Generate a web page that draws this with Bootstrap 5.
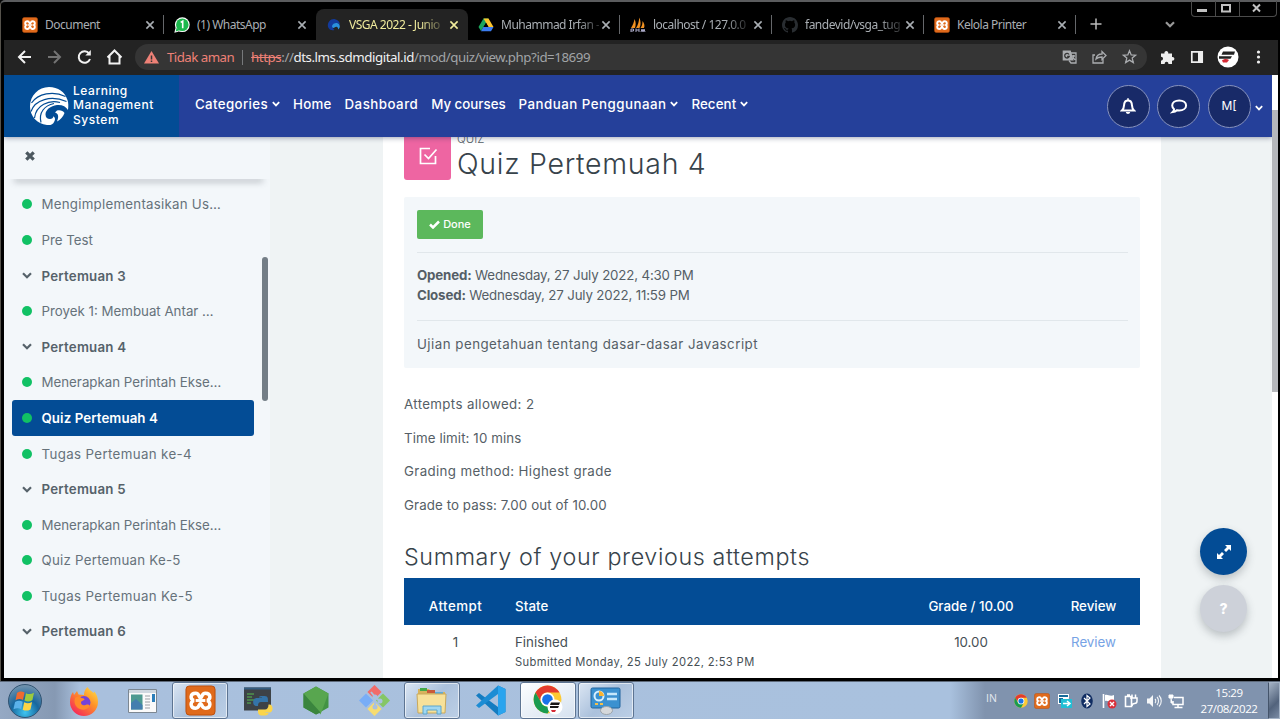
<!DOCTYPE html>
<html lang="id">
<head>
<meta charset="utf-8">
<meta name="viewport" content="width=device-width, initial-scale=1">
<title>VSGA 2022 - Junior Web Developer</title>
<link href="https://cdn.jsdelivr.net/npm/bootstrap@5.3.0/dist/css/bootstrap.min.css" rel="stylesheet">
<style>
  html, body { height: 100%; }
  body { width: 1280px; height: 719px; overflow: hidden; background: #050505; font-family: Inter, "Open Sans", sans-serif; font-size: 13.3px; line-height: 20px; color: #555e66; }
  svg { display: block; flex: none; }
  .defs { width: 0; height: 0; position: absolute; }
  /* letter spacing steps */
  .ls1 { letter-spacing: .1px; }
  .ls2 { letter-spacing: .24px; }
  .ls3 { letter-spacing: .36px; }
  .ls4 { letter-spacing: .48px; }
  /* browser window */
  .win { height: 681px; border-top: 2px solid #5b5c5e; border-left: 1px solid #55524b; padding: 0 2px 3px 3px; background: #000; border-radius: 5px 0 0 0; }
  .tabs { height: 38px; padding-left: 8px; font: 12px/16px "Noto Sans", "Open Sans", sans-serif; color: #a9aeb3; }
  .btab { width: 152px; margin-top: 7px; height: 31px; padding: 0 9px 0 10px; position: relative; }
  .btab.sep::after { content: ""; position: absolute; right: 0; top: 6px; height: 19px; width: 1px; background: #65676a; }
  .btab .ttl { margin-left: 7px; white-space: nowrap; letter-spacing: -.5px; }
  .btab .fade-end { -webkit-mask-image: linear-gradient(90deg, #000 78%, rgba(0,0,0,.25)); mask-image: linear-gradient(90deg, #000 78%, rgba(0,0,0,.25)); }
  .btab.on { background: #232323; border-radius: 8px 8px 0 0; color: #f0eb9c; }
  .wctl { width: 86px; height: 16px; margin: -1px 1px 0 0; border: 1px solid #4b4b4b; border-top: 0; border-radius: 0 0 4px 4px; color: #c2c2c2; }
  .bar { height: 35px; background: #232323; padding: 0 13px 1px 12px; font: 13.3px/18px "Noto Sans", "Open Sans", sans-serif; }
  .omni { width: 1012px; height: 26px; border-radius: 13px; background: #353535; margin-left: 10px; padding: 0 9px; color: #a1a4a7; }
  .omni .warn { color: #ee8177; }
  .omni .host { color: #f1f2f3; }
  .omni span { white-space: nowrap; }
  .omni .divide { width: 1px; height: 15px; background: #77797b; margin: 0 8px; }
  .tidak { letter-spacing: -.55px; }
  .url { letter-spacing: -.44px; }
  /* page */
  .page { height: 603px; background: #eff3f4; }
  .head { height: 62px; background: #25409a; color: #fff; box-shadow: 0 1px 5px rgba(20,30,70,.4); position: relative; z-index: 3; }
  .brand { width: 175px; height: 62px; background: #034c95; padding: 0 0 1px 25px; font-size: 12px; line-height: 14.2px; font-weight: 500; letter-spacing: .55px; }
  .menu { margin-left: 16px; gap: 13px; font-size: 13.3px; font-weight: 500; margin-top: -5px; }
  .menu .it { gap: 4px; white-space: nowrap; }
  .users { gap: 7.5px; padding-right: 9px; }
  .rnd { width: 43px; height: 43px; border-radius: 50%; background: #182a68; border: 1px solid #8792bd; font-size: 12px; }
  .side { width: 266px; background: #f3f7fa; color: #66727a; }
  .side-top { height: 42px; padding: 0 0 4px 21px; position: relative; z-index: 2; }
  .side-top::after { content: ""; position: absolute; left: 8px; right: 5px; bottom: 0; height: 8px; box-shadow: 0 5px 6px -2px rgba(70,80,90,.38); z-index: -1; }
  .side-top::before { content: ""; position: absolute; inset: 0; background: #f3f7fa; z-index: 0; }
  .side-top svg { position: relative; z-index: 1; }
  .list { padding: 7.7px 16px 0 8px; }
  .li { height: 35.58px; padding-left: 10px; gap: 9.5px; white-space: nowrap; }
  .li .dot { width: 10px; height: 10px; border-radius: 50%; background: #11c164; flex: none; }
  .li.b { font-weight: 600; color: #56626a; letter-spacing: .22px; }
  .li.on { background: #034c95; color: #fff; font-weight: 600; border-radius: 3px; letter-spacing: .08px; }
  .sthumb { position: absolute; left: 258px; top: 182px; width: 6px; height: 144px; border-radius: 3px; background: #747e87; }
  .main { width: 778px; margin-left: 113px; background: #fff; padding: 0 21px; }
  .qico { width: 47px; height: 43px; background: #ee65a2; border-radius: 0 0 3px 3px; }
  .kind { font-size: 11.5px; line-height: 14px; margin-top: -5px; text-transform: uppercase; font-weight: 300; }
  .qtitle { font-size: 28.5px; line-height: 34px; font-weight: 300; color: #37434b; margin: 1px 0 0; letter-spacing: .7px; }
  .info { margin-top: 16px; height: 171px; background: #f3f7fa; border-radius: 2px; padding: 12.5px 12px 0 13px; }
  .done { width: 66px; height: 29px; border-radius: 2px; background: #5cb85c; color: #fff; font-size: 11px; font-weight: 500; gap: 3px; }
  .info .rule { height: 1px; background: #e1e7eb; margin-top: 13px; }
  .info .dates { line-height: 20.7px; margin: 12px 0 14px; letter-spacing: -.16px; }
  .facts { margin-top: 26px; }
  .facts div { height: 33.7px; }
  h3.sum { font-size: 23.3px; line-height: 30px; font-weight: 300; color: #37434b; margin: 13px 0 0; letter-spacing: .62px; }
  .att { margin-top: 6px; width: 736px; color: #464f55; table-layout: fixed; border-collapse: collapse; }
  .att th { background: #034c95; color: #fff; font-weight: 500; height: 47px; padding: 9px 8px 0; }
  .att td { padding: 7.5px 8px 0; vertical-align: top; }
  .att .sub { font-size: 11.2px; line-height: 20px; letter-spacing: .37px; }
  .att .c1 { width: 103px; } .att .c2 { width: 388px; } .att .c3 { width: 152px; } .att .c4 { width: 93px; }
  .att .rev { color: #77a3e5; }
  .fab { position: absolute; z-index: 4; width: 47px; height: 47px; border-radius: 50%; left: 1196px; box-shadow: 0 4px 8px rgba(50,60,70,.28); }
  .fab.full { top: 453px; background: #034c95; }
  .fab.help { top: 510px; background: #cdd1d9; color: #fff; font-weight: 800; font-size: 14px; }
  .scroll { width: 6px; background: #fff; height: 603px; padding-top: 35px; }
  .scroll div { height: 282px; background: #b5b7bb; }
  /* taskbar */
  .task { height: 38px; border-top: 1px solid #5e6a7a; background: linear-gradient(90deg, #95a9c4 0, #8699b3 55px, #a9c0dd 80px, #a9c1de 950px, #8093ae 985px, #8093ae 100%); font: 11.5px/16px "Open Sans", "Noto Sans", sans-serif; color: #fff; }
  .tb { width: 58px; height: 37px; }
  .tb.open { width: 56px; margin: 0 1px; border: 1px solid #5d7492; border-radius: 3px; background: linear-gradient(135deg, #dbe6f3, #abc1dc 50%, #bccfe6); box-shadow: inset 0 0 0 1px rgba(255,255,255,.6); }
  .tb.act { background: linear-gradient(150deg, #fdfeff, #d5e1ef); }
  .start { width: 55px; padding-left: 8px; }
  .lang { font-size: 10.5px; margin: -5px 17px 0 0; color: #e4e9f0; }
  .tray { gap: 6.3px; }
  .clock { width: 62px; text-align: center; letter-spacing: -.4px; margin: 1px 8px 0 14px; white-space: nowrap; }
  .desk { width: 12px; height: 37px; border: 1px solid #a4b3c6; border-left-color: #44546a; background: linear-gradient(135deg, #a5b3c5, #52637c 60%, #7a8ba4); }
</style>
</head>
<body>
<svg class="defs" aria-hidden="true">
  <symbol id="x" viewBox="0 0 10 10"><path d="M1.4 1.4l7.2 7.2M8.6 1.4L1.4 8.6" stroke="currentColor" stroke-width="1.6"/></symbol>
  <symbol id="cv" viewBox="0 0 10 7"><path d="M1 1.3l4 4 4-4" fill="none" stroke="currentColor" stroke-width="2.200"/></symbol>
  <symbol id="xampp" viewBox="0 0 32 32"><rect x="1" y="1" width="30" height="30" rx="3.5" fill="#e06a1b" stroke="#bb5010"/><path d="M11 8.5c-6 0-6 7-1.500 7.500-4.500.5-4.500 8 1.500 8 4 0 3.500-5 5-5s1 5 5 5c6 0 6-7.500 1.500-8 4.500-.5 4.500-7.500-1.500-7.500-4 0-3.500 5-5 5s-1-5-5-5z" fill="none" stroke="#fff" stroke-width="3.600"/><path d="M11 16h10" stroke="#fff" stroke-width="3"/></symbol>
  <symbol id="chrome" viewBox="0 0 48 48"><circle cx="24" cy="24" r="23" fill="#fcc934"/><path d="M4.100 12.500A23 23 0 0 1 43.900 12.500H24a11.500 11.500 0 0 0-10 17.250z" fill="#e33b2e"/><path d="M4.100 12.500L14 29.750a11.500 11.500 0 0 0 20 0L24 47A23 23 0 0 1 4.100 12.500z" fill="#199b50"/><circle cx="24" cy="24" r="11.500" fill="#fff"/><circle cx="24" cy="24" r="8.800" fill="#1a73e8"/></symbol>
</svg>

<div class="win d-flex flex-column">
  <div class="tabs d-flex align-items-start">
    <div class="btab sep d-flex align-items-center"><svg width="16" height="16"><use href="#xampp"/></svg><span class="ttl">Document</span><svg class="ms-auto" width="10" height="10"><use href="#x"/></svg></div>
    <div class="btab d-flex align-items-center"><svg width="16" height="16" viewBox="0 0 16 16"><circle cx="8.300" cy="7.700" r="7.400" fill="#fff"/><path d="M.3 15.700L1.500 11 5 14.500z" fill="#fff"/><circle cx="8.300" cy="7.700" r="6.300" fill="#1cb84d"/><path d="M1.700 14.400l1-4 2.800 2.900z" fill="#1cb84d"/><path d="M6.700 5.400l2-1.200v7" fill="none" stroke="#fff" stroke-width="1.600"/></svg><span class="ttl">(1) WhatsApp</span><svg class="ms-auto" width="10" height="10"><use href="#x"/></svg></div>
    <div class="btab on d-flex align-items-center"><svg width="16" height="16" viewBox="0 0 16 16"><path d="M2 10C1 5 5 1.500 9 2.200c3 .6 5 3 5 5.800-2-2.500-6-2-7 .5-.6 1.500 0 3.500 1.500 4.500C5.500 14 3 12.500 2 10z" fill="#123a9c"/><path d="M6 9c1-3.500 6-4 7.500-1 .7 1.500.3 3.500-1.500 4.500.5-3-2-3.500-3.500-2C7.700 11.500 6 11 6 9z" fill="#2a8fdd"/></svg><span class="ttl fade-end">VSGA 2022 - Junio</span><svg class="ms-auto" width="10" height="10"><use href="#x"/></svg></div>
    <div class="btab sep d-flex align-items-center"><svg width="16" height="16" viewBox="0 0 16 16"><path d="M5.500 1.500h5L8 6 3 14 .5 10z" fill="#1ba55c"/><path d="M5.500 1.500h5L15.500 10h-5z" fill="#fdc52c"/><path d="M5.300 10h10.200L13 14.300H3z" fill="#3b7cf0"/><path d="M8 5.800l2.400 4.200H5.600z" fill="#000"/></svg><span class="ttl fade-end ls-tab">Muhammad Irfan -</span><svg class="ms-auto" width="10" height="10"><use href="#x"/></svg></div>
    <div class="btab sep d-flex align-items-center"><svg width="16" height="16" viewBox="0 0 16 16"><path d="M1 11C3 8 4 5 4.500 2c1.500 3 1.500 6 .5 9zM6 11c2-3 3-6 3.200-10.500C11 4 11 8 9.500 11zM10.500 11c1.500-2 2-4 2-7 1.800 2 2.500 5 1.500 7z" fill="#f29222"/><path d="M1 15v-3h2.500v2H1m5 1v-3.500M6 13h3M9 11.500V15m2 0l1-3 1 3 1-3 1 3" fill="none" stroke="#aaa9c6"/></svg><span class="ttl fade-end">localhost / 127.0.0</span><svg class="ms-auto" width="10" height="10"><use href="#x"/></svg></div>
    <div class="btab sep d-flex align-items-center"><svg width="16" height="16" viewBox="0 0 16 16"><path fill="#292d31" d="M8 0C3.580 0 0 3.580 0 8c0 3.540 2.290 6.530 5.470 7.590.4.070.55-.17.55-.38v-1.490c-2.010.37-2.530-.49-2.690-.94-.09-.23-.48-.94-.82-1.130-.28-.15-.68-.52-.01-.53.63-.01 1.080.58 1.230.82.72 1.210 1.870.87 2.330.66.07-.52.28-.87.51-1.070-1.780-.2-3.640-.89-3.640-3.950 0-.87.31-1.590.82-2.150-.08-.2-.36-1.020.08-2.120 0 0 .67-.21 2.200.82a7.600 7.600 0 0 1 4 0c1.530-1.040 2.200-.82 2.200-.82.44 1.100.16 1.920.08 2.120.51.56.82 1.270.82 2.150 0 3.070-1.870 3.750-3.650 3.950.29.25.54.73.54 1.480v2.200c0 .21.15.46.55.38A8 8 0 0 0 16 8c0-4.420-3.580-8-8-8z"/></svg><span class="ttl fade-end">fandevid/vsga_tug</span><svg class="ms-auto" width="10" height="10"><use href="#x"/></svg></div>
    <div class="btab sep d-flex align-items-center"><svg width="16" height="16"><use href="#xampp"/></svg><span class="ttl">Kelola Printer</span><svg class="ms-auto" width="10" height="10"><use href="#x"/></svg></div>
    <svg style="margin:16px 0 0 14px" width="12" height="12" viewBox="0 0 12 12"><path d="M6 .5v11M.5 6h11" stroke="#bbb" stroke-width="1.500"/></svg>
    <svg style="margin:19px 0 0 63px;color:#999" width="10" height="7"><use href="#cv"/></svg>
    <div class="wctl d-flex ms-auto"><svg width="84" height="15" viewBox="0 0 84 15"><path d="M5 9.500h10" stroke="currentColor" stroke-width="3"/><rect x="30" y="4" width="8" height="6.500" fill="none" stroke="currentColor" stroke-width="2"/><path d="M23.500 0v15M47.500 0v15" stroke="#4b4b4b"/><path d="M61 3.500l7 7M68 3.500l-7 7" stroke="currentColor" stroke-width="2"/></svg></div>
  </div>

  <div class="bar d-flex align-items-center">
    <svg width="109" height="18" viewBox="0 0 109 18" fill="none" stroke="#f2f2f2" stroke-width="2"><path d="M15 9H3m6-6L3 9l6 6"/><path stroke="#737373" d="M32 9h12m-6-6l6 6-6 6"/><path d="M73.200 5.500A5.800 5.800 0 1 0 74 11"/><path d="M74.800 2v5.500h-5.500z" fill="#f2f2f2" stroke="none"/><path d="M91.500 9.500l7-7 7 7M93.500 8v7.500h10V8"/></svg>
    <div class="omni d-flex align-items-center">
      <svg width="15" height="13" viewBox="0 0 15 13"><path d="M7.500 0L15 12.500H0z" fill="#ee8177"/><path d="M7.500 4.500v4M7.500 9.500V11" stroke="#353535" stroke-width="1.500"/></svg>
      <span class="warn ms-2 tidak">Tidak aman</span>
      <span class="divide"></span>
      <span class="url"><s class="warn">https</s>://<span class="host">dts.lms.sdmdigital.id</span>/mod/quiz/view.php?id=18699</span>
      <svg class="ms-auto" width="76" height="16" viewBox="0 0 76 16" fill="none" stroke="#abadb0" stroke-width="1.300"><path d="M.7 1.500h8l3 10h-11z" fill="#abadb0" stroke="none"/><path d="M9 4h5v10H9l-2-2.500M10 7h3M11.500 6c0 3-.5 4-1.500 4.500M11 8l2 3"/><path d="M7 5.500A2.300 2.300 0 1 0 7.200 7.500H5.200" stroke="#353535"/><path d="M33 6h-2v8h10v-4M34 10c.5-3.500 3-5 6-5V2.500l4 4-4 4V8c-3 0-4.500.5-6 2z"/><path d="M67.500 1.800l1.700 4.100 4.400.3-3.400 2.900 1.100 4.400-3.800-2.400-3.800 2.400 1.100-4.400-3.400-2.900 4.400-.3z"/></svg>
    </div>
    <svg class="ms-auto" width="106" height="22" viewBox="0 0 106 22"><path d="M2 7.500h3.500c-.8-3.500 4.500-3.500 3.700 0H13v3.600c3.200-.6 3.200 4.100 0 3.500V18H9.400c.3-3-4-3-3.700 0H2v-3.500c2.700 0 2.700-3.800 0-3.800z" fill="#eee"/><path d="M32.800 5.800h10.400v10.400H32.800z" fill="none" stroke="#eee" stroke-width="1.700"/><path d="M39 5h5v12h-5z" fill="#eee"/><circle cx="69" cy="11" r="10.500" fill="#fff"/><path d="M64 5.500h12l-1 3.200H62.500zM60 10.200h13l-1.500 2.500H60z" fill="#222"/><path d="M63 14.500c2-2 5-2 7-.5l-2 2.500h-4z" fill="#d62a35"/><g fill="#eee"><circle cx="99.500" cy="6" r="1.600"/><circle cx="99.500" cy="11" r="1.600"/><circle cx="99.500" cy="16" r="1.600"/></g></svg>
  </div>

  <div class="d-flex">
    <div class="page flex-grow-1 position-relative overflow-hidden">
      <header class="head d-flex align-items-center">
        <div class="brand d-flex align-items-center">
          <svg width="40" height="40" viewBox="0 0 40 40"><path d="M20 1c9 0 16 5 18.500 13C39.500 17 39.500 20 39 24c-2-3.500-6-5.500-11-5-6.500.7-11.500 5-11.500 9.500 0 3 2 4.500 4.500 4.500 2 0 3.500-1.200 3.300-2.800 1.900 1 2.200 3.300 1 5.300C24 38.500 21.500 39.500 18 39 8 38 1 30 1 20.500 1 9.500 9.500 1 20 1z" fill="#fff"/><path d="M28 24.500c3-.8 6 0 7.500 2.500-1.500 4-4 6.500-7.500 8.500 2-4.500 1.500-8-2-9z" fill="#fff"/><path d="M2.500 17C9 7.500 24 4.500 36.500 10.500M2 25.500C6 13.500 22 9 37.500 15.500M5.500 32C7 19 20 13.500 31 16.500M12 36.500C9.500 26.500 15.500 19.500 25 17.500" fill="none" stroke="#034c95" stroke-width="1.200"/></svg>
          <div class="ms-1">Learning<br>Management<br>System</div>
        </div>
        <nav class="menu d-flex align-items-center">
          <span class="it ls3 d-flex align-items-center">Categories<svg width="8" height="6"><use href="#cv"/></svg></span>
          <span class="it ls2">Home</span><span class="it ls4">Dashboard</span><span class="it">My courses</span>
          <span class="it ls4 d-flex align-items-center">Panduan Penggunaan<svg width="8" height="6"><use href="#cv"/></svg></span>
          <span class="it ls1 d-flex align-items-center">Recent<svg width="8" height="6"><use href="#cv"/></svg></span>
        </nav>
        <div class="users ms-auto d-flex align-items-center">
          <div class="rnd d-flex align-items-center justify-content-center"><svg width="16" height="17" viewBox="0 0 16 17"><path d="M2 12.500c2-2 2-4 2.200-6.500.3-2.300 1.800-3.600 3.800-3.600s3.500 1.300 3.800 3.600c.2 2.500.2 4.500 2.200 6.500z" fill="none" stroke="#fff" stroke-width="2"/><path d="M7.200.3h1.600v2H7.200zM5.800 14h4.400c-.3 2.600-4.100 2.600-4.400 0z" fill="#fff"/></svg></div>
          <div class="rnd d-flex align-items-center justify-content-center"><svg width="18" height="17" viewBox="0 0 18 17"><path d="M9.200 2.500c4 0 6.900 2 6.900 4.900s-2.900 5-6.900 5c-.8 0-1.500 0-2.200-.2-1.300 1.200-2.700 1.700-4.300 1.900.9-.8 1.300-1.700 1.400-2.900-1.200-.9-1.900-2.200-1.900-3.700 0-3 3-5 7-5z" fill="none" stroke="#fff" stroke-width="2"/></svg></div>
          <div class="rnd d-flex align-items-center justify-content-center">M[</div>
          <svg style="margin-left:-3px;margin-top:3px" width="8" height="6"><use href="#cv"/></svg>
        </div>
      </header>
      <div class="d-flex" style="height:541px">
        <aside class="side overflow-hidden">
          <div class="side-top d-flex align-items-center"><svg width="10" height="10" viewBox="0 0 10 10"><path d="M1.300 1.300l7.400 7.400M8.700 1.300L1.300 8.700" stroke="#4c585f" stroke-width="3.200"/></svg></div>
          <div class="list">
            <div class="li ls2 d-flex align-items-center"><i class="dot"></i>Mengimplementasikan Us…</div>
            <div class="li d-flex align-items-center"><i class="dot"></i>Pre Test</div>
            <div class="li b d-flex align-items-center"><svg width="10" height="7"><use href="#cv"/></svg>Pertemuan 3</div>
            <div class="li d-flex align-items-center"><i class="dot"></i>Proyek 1: Membuat Antar …</div>
            <div class="li b d-flex align-items-center"><svg width="10" height="7"><use href="#cv"/></svg>Pertemuan 4</div>
            <div class="li d-flex align-items-center"><i class="dot"></i>Menerapkan Perintah Ekse…</div>
            <div class="li on d-flex align-items-center"><i class="dot"></i>Quiz Pertemuah 4</div>
            <div class="li ls3 d-flex align-items-center"><i class="dot"></i>Tugas Pertemuan ke-4</div>
            <div class="li b d-flex align-items-center"><svg width="10" height="7"><use href="#cv"/></svg>Pertemuan 5</div>
            <div class="li d-flex align-items-center"><i class="dot"></i>Menerapkan Perintah Ekse…</div>
            <div class="li ls2 d-flex align-items-center"><i class="dot"></i>Quiz Pertemuan Ke-5</div>
            <div class="li ls3 d-flex align-items-center"><i class="dot"></i>Tugas Pertemuan Ke-5</div>
            <div class="li b d-flex align-items-center"><svg width="10" height="7"><use href="#cv"/></svg>Pertemuan 6</div>
          </div>
        </aside>
        <main class="main">
          <div class="d-flex">
            <div class="qico d-flex align-items-center justify-content-center"><svg width="20" height="20" viewBox="0 0 20 20" style="margin-top:-5px"><path d="M12 2.500H2.500v15h15V10M6.500 8.500l4 4 8-9" fill="none" stroke="#fff" stroke-width="1.700"/></svg></div>
            <div style="margin-left:6px"><div class="kind">Quiz</div><h1 class="qtitle">Quiz Pertemuah 4</h1></div>
          </div>
          <section class="info">
            <div class="done d-flex align-items-center justify-content-center"><svg width="11" height="9" viewBox="0 0 11 9"><path d="M1 4.500l3 3L10 1.500" fill="none" stroke="#fff" stroke-width="2.500"/></svg>Done</div>
            <div class="rule"></div>
            <div class="dates"><strong>Opened:</strong> Wednesday, 27 July 2022, 4:30 PM<br><strong>Closed:</strong> Wednesday, 27 July 2022, 11:59 PM</div>
            <div class="rule"></div>
            <div style="margin-top:13px" class="ls4">Ujian pengetahuan tentang dasar-dasar Javascript</div>
          </section>
          <div class="facts">
            <div class="ls3">Attempts allowed: 2</div><div class="ls1">Time limit: 10 mins</div><div class="ls3">Grading method: Highest grade</div><div class="ls1">Grade to pass: 7.00 out of 10.00</div>
          </div>
          <h3 class="sum">Summary of your previous attempts</h3>
          <table class="att">
            <colgroup><col class="c1"><col class="c2"><col class="c3"><col class="c4"></colgroup>
            <tr><th class="text-center ls4">Attempt</th><th class="ls1">State</th><th class="text-center">Grade / 10.00</th><th class="text-center">Review</th></tr>
            <tr><td class="text-center">1</td><td>Finished<div class="sub">Submitted Monday, 25 July 2022, 2:53 PM</div></td><td class="text-center">10.00</td><td class="text-center rev">Review</td></tr>
          </table>
        </main>
      </div>
      <div class="sthumb"></div>
      <div class="fab full d-flex align-items-center justify-content-center"><svg width="14" height="14" viewBox="0 0 14 14"><path d="M8 0h6v6l-2-2-3 3-2-2 3-3zM6 14H0V8l2 2 3-3 2 2-3 3z" fill="#fff"/></svg></div>
      <div class="fab help d-flex align-items-center justify-content-center">?</div>
    </div>
    <div class="scroll"><div></div></div>
  </div>
</div>

<div class="task d-flex align-items-center">
  <div class="start"><svg width="34" height="34" viewBox="0 0 34 34"><defs><radialGradient id="orb" cx=".5" cy=".85" r=".85"><stop offset="0" stop-color="#3fc4f0"/><stop offset=".5" stop-color="#17679e"/><stop offset="1" stop-color="#7795ae"/></radialGradient></defs><circle cx="17" cy="17" r="16.500" fill="url(#orb)" stroke="#315372"/><path d="M9 9c3-2 5-1.800 7.500-.5L15 16c-2.500-1.300-5-1.200-7.500.3z" fill="#ef6a30"/><path d="M18 9.200c2.500 1.200 5 1.200 8-.4l-1.600 7.500c-3 1.500-5.300 1.500-7.900.3z" fill="#9ccb3e"/><path d="M7 18c2.800-1.600 5-1.500 7.700-.3L13.200 25c-2.600-1.200-5-1.200-7.700.3z" fill="#5bb2ea"/><path d="M16.200 18.300c2.600 1.200 5 1.200 7.900-.3l-1.600 7.400c-3 1.500-5.200 1.500-7.800.3z" fill="#fdd445"/></svg></div>
  <div class="tb d-flex align-items-center justify-content-center"><svg width="30" height="30" viewBox="0 0 30 30"><defs><linearGradient id="fx" x1="1" y1="0" x2=".2" y2="1"><stop offset="0" stop-color="#ffe84b"/><stop offset=".45" stop-color="#ff9328"/><stop offset="1" stop-color="#f5225e"/></linearGradient></defs><path d="M18.500 1c1.500 3 4.500 4 6 6l.8-1.500C28 9 29 12 29 16a14 14 0 0 1-28 0c0-4 1-7.500 3-10l1 3 3-4 1.500 3.500L15 9c0-3 1-6 3.500-8z" fill="url(#fx)"/><circle cx="15" cy="16.500" r="6.500" fill="#7542d8"/><path d="M6 12c3-2 5-1 6.500 0 2 .2 3 .8 3 1.800-1 1-3 .8-3.500 2.500-.5 2 2 4 5 2.500 2.500-1 5 0 3 2.500-3 3.500-9 3-12 0-2.500-2.500-3-6-2-9.300z" fill="#ff8a2a"/></svg></div>
  <div class="tb d-flex align-items-center justify-content-center"><svg width="29" height="24" viewBox="0 0 29 24"><path d="M.5.500h28v23H.5z" fill="#fafafa" stroke="#7c8792"/><path d="M1 1h27v3H1z" fill="#cfd8e0"/><path d="M3 5.500h11.500v15H3z" fill="#4d9a91"/><path d="M3 14l5-4 6.500 6v4.500H3z" fill="#437eae"/><path d="M17 7h5M17 10h5M17 13h5M17 16h5M17 19h5" stroke="#9a9fa5"/><path d="M24 5h3v8h-3z" fill="#2c7fba"/></svg></div>
  <div class="tb open d-flex align-items-center justify-content-center"><svg width="31" height="31"><use href="#xampp"/></svg></div>
  <div class="tb d-flex align-items-center justify-content-center"><svg width="30" height="30" viewBox="0 0 30 30"><path d="M1 1.500h27v23H1z" fill="#3d4246"/><path d="M1 1.500h27v2H1z" fill="#365d80"/><path d="M4 8h7M4 11h5M4 14h7M4 17h4" stroke="#4f944c" stroke-width="1.300"/><path d="M20 10c5 0 5 1 5 6h-7c-2 0-3 1-3 4h-2c-4 0-4-8 1-8h5v-.5h-3c0-1.500 1-1.500 4-1.500z" fill="#3474a8"/><path d="M20 29.500c-5 0-5-2-5-6h7c2 0 3.500-1.500 3.500-5h1c4 0 4 8 0 8h-4v.5h3c0 2-2 2.500-5.500 2.500z" fill="#fbd54b"/></svg></div>
  <div class="tb d-flex align-items-center justify-content-center"><svg width="26" height="29" viewBox="0 0 26 29"><path d="M13 .5l12.500 7v14L13 28.500.5 21.500v-14z" fill="#439344"/><path d="M13 .5l12.500 7-8 21L.5 7.500z" fill="#58a64f"/><path d="M.5 7.500l17 19L13 28.500.5 21.500z" fill="#3a853e"/></svg></div>
  <div class="tb d-flex align-items-center justify-content-center"><svg width="31" height="31" viewBox="0 0 31 31"><g transform="rotate(45 15.500 15.500)"><path d="M4.500 4.500h10v10h-10z" fill="#f16b69"/><path d="M16.500 4.500h10v10h-10z" fill="#85c665"/><path d="M4.500 16.500h10v10h-10z" fill="#78adf7"/><path d="M16.500 16.500h10v10h-10z" fill="#f7dc70"/></g><path d="M12 7l4 5v10M16 12l5 4" stroke="#a9c1de" stroke-width="2" fill="none"/><g fill="#a9c1de"><circle cx="16" cy="12" r="2.500"/><circle cx="21" cy="16" r="2.500"/><circle cx="16" cy="22" r="2.500"/></g></svg></div>
  <div class="tb open d-flex align-items-center justify-content-center"><svg width="32" height="30" viewBox="0 0 32 30"><path d="M2 3h11l2 3h14v21H2z" fill="#d8b45c"/><path d="M4 2h7v3H4z" fill="#45a949"/><path d="M11 4h8v3h-8z" fill="#c85a3a"/><path d="M19 6h8v3h-8z" fill="#5cabda"/><path d="M1 8h29l-1 19H2z" fill="#f7e19a" stroke="#c9a85b"/><path d="M7 28v-8h18v8h-4v-4H11v4z" fill="#9fd7f2" stroke="#5ca6cc"/></svg></div>
  <div class="tb d-flex align-items-center justify-content-center"><svg width="31" height="31" viewBox="0 0 31 31"><path d="M23 .5L30.500 4v23L23 30.500 1 10.500 4 8l19 14z" fill="#147cc1"/><path d="M23 .5v8.500L4 23l-3-2.500z" fill="#1c8cd4"/><path d="M23 .5L30.500 4v23L23 30.500z" fill="#2aa4ee"/></svg></div>
  <div class="tb open act d-flex align-items-center justify-content-center"><svg width="31" height="31" viewBox="0 0 31 31"><use href="#chrome" width="29" height="29"/><circle cx="22" cy="22" r="7.500" fill="#fff"/><path d="M18 17.500h9l-1 2.500h-9zM17 21h9l-1 2h-8z" fill="#181818"/><path d="M18 25h5l-1 2h-3z" fill="#d52b36"/></svg></div>
  <div class="tb open d-flex align-items-center justify-content-center"><svg width="32" height="28" viewBox="0 0 32 28"><rect x="1" y="1" width="29" height="20" rx="1.500" fill="#3b91d0" stroke="#23649d"/><circle cx="9" cy="9" r="4.500" fill="none" stroke="#d7efff" stroke-width="2"/><path d="M9 9V4a5 5 0 0 1 5 5z" fill="#f8b331"/><path d="M17 7h10M17 12h10" stroke="#c5e7fa" stroke-width="2.500"/><path d="M5 17h3m2 0h3" stroke="#f5c04a" stroke-width="2"/><ellipse cx="16.500" cy="23.500" rx="6" ry="4" fill="#d5d8db" stroke="#9ba3aa"/></svg></div>
  <div class="ms-auto d-flex align-items-center h-100">
    <span class="lang">IN</span>
    <div class="tray d-flex align-items-center">
      <svg width="14" height="14"><use href="#chrome"/></svg>
      <svg width="16" height="16"><use href="#xampp"/></svg>
      <svg width="16" height="16" viewBox="0 0 16 16"><path d="M1 1h11v4l-2 6H1z" fill="#fff"/><path d="M2 2h9v2H2zM2 5h4v5H2z" fill="#176d9c"/><path d="M4 6h11v9H4z" fill="#21bfd5"/><path d="M6 10.500h6M10 8l3 2.500-3 2.500" stroke="#fff" stroke-width="1.500" fill="none"/></svg>
      <svg width="16" height="16" viewBox="0 0 16 16"><ellipse cx="8" cy="8" rx="5.800" ry="7.500" fill="#102d62"/><path d="M5 5l6 6-3 2.500v-11L11 5l-6 6" fill="none" stroke="#fff" stroke-width="1.200"/></svg>
      <svg width="16" height="16" viewBox="0 0 16 16"><path d="M2.500 1v14" stroke="#fff" stroke-width="1.600"/><path d="M4 2c3-1 5 2 9 0v6c-4 2-6-1-9 0z" fill="#fff"/><circle cx="11" cy="11" r="4.500" fill="#da303b"/><path d="M9 9l4 4M13 9l-4 4" stroke="#fff" stroke-width="1.400"/></svg>
      <svg width="16" height="16" viewBox="0 0 16 16"><path d="M2.500 3.500h6v10h-6zM4 2h3" fill="none" stroke="#fff" stroke-width="1.600"/><path d="M7 5h7v3c0 2-1.500 2.500-2.500 2.500S9 11 9 13M9 5V1.500M12.500 5V1.500" fill="none" stroke="#fff" stroke-width="1.500"/></svg>
      <svg width="16" height="16" viewBox="0 0 16 16"><path d="M1 5.500h2.500L7 2v12l-3.500-3.500H1z" fill="#f4f6f8"/><path d="M9 6c1 1 1 3 0 4M11 4c2 2 2 6 0 8M13 2.500c3 3 3 8 0 11" fill="none" stroke="#f4f6f8" stroke-width="1.100"/></svg>
      <svg width="16" height="16" viewBox="0 0 16 16"><path d="M6 4.500h9v7H5V8M10 12v2M6.500 14.500h8" fill="none" stroke="#fff" stroke-width="1.500"/><path d="M1 2h4v3H1zM3 5v5h2" fill="#fff" stroke="#fff"/></svg>
    </div>
    <div class="clock">15:29<br>27/08/2022</div>
    <div class="desk"></div>
  </div>
</div>
<script src="https://cdn.jsdelivr.net/npm/bootstrap@5.3.0/dist/js/bootstrap.bundle.min.js"></script>
</body>
</html>
